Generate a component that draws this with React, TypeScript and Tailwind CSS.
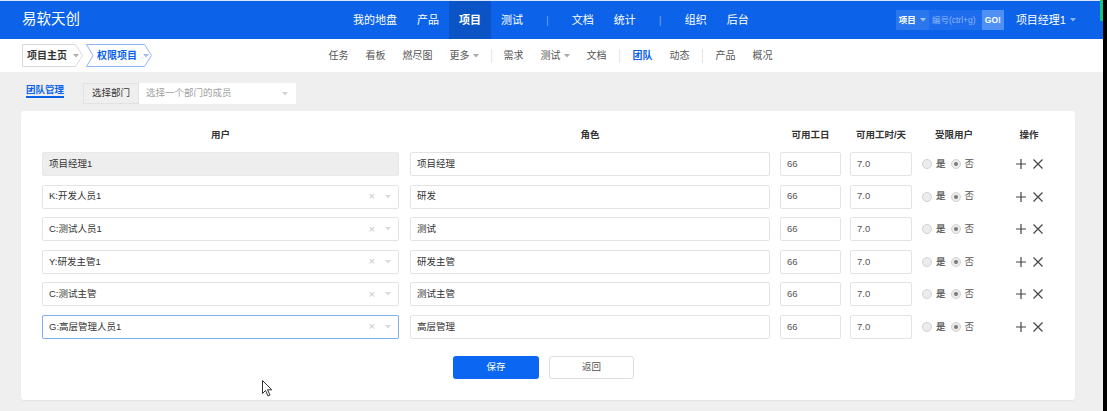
import React from "react";

const rows = [
  { user: "项目经理1", role: "项目经理", disabled: true },
  { user: "K:开发人员1", role: "研发" },
  { user: "C:测试人员1", role: "测试" },
  { user: "Y:研发主管1", role: "研发主管" },
  { user: "C:测试主管", role: "测试主管" },
  { user: "G:高层管理人员1", role: "高层管理", focus: true },
];

function Caret({ className = "" }: { className?: string }) {
  return (
    <svg width="6" height="4" viewBox="0 0 6 4" className={className}>
      <path d="M0 0 L6 0 L3 3.5 Z" fill="currentColor" />
    </svg>
  );
}

function Radio({ checked }: { checked?: boolean }) {
  return (
    <span className="flex h-[10px] w-[10px] items-center justify-center rounded-full border border-[#d2d2d2] bg-[#ececec]">
      {checked && <span className="h-[4px] w-[4px] rounded-full bg-[#7a7a7a]" />}
    </span>
  );
}

export default function App() {
  return (
    <div className="relative flex h-[411px] w-[1107px] overflow-hidden bg-black font-['Liberation_Sans','Noto_Sans_CJK_SC',sans-serif]">
      <div className="flex w-[1103px] flex-col bg-[#efefef]">
        {/* top header */}
        <div className="flex h-[39px] items-center border-t border-[#d8e5fb] bg-[#0c63ea] text-white">
          <div className="w-[343px] pl-[22px] text-[14.5px]">易软天创</div>
          <nav className="flex h-full items-center text-[11px]">
            <span className="px-[10px]">我的地盘</span>
            <span className="px-[10px]">产品</span>
            <span className="flex h-full items-center bg-[#0a54c6] px-[10px] font-bold">项目</span>
            <span className="px-[10px]">测试</span>
            <span className="px-[13px] text-[#6fa0f0]">|</span>
            <span className="px-[10px]">文档</span>
            <span className="px-[10px]">统计</span>
            <span className="px-[13px] text-[#6fa0f0]">|</span>
            <span className="px-[10px]">组织</span>
            <span className="px-[10px]">后台</span>
          </nav>
          <div className="ml-auto flex h-[20px] items-stretch text-[8.5px]">
            <div className="flex w-[33px] items-center justify-center gap-[4px] bg-[#2b77ee] font-bold">
              项目 <Caret className="text-[#a9c6f6]" />
            </div>
            <div className="flex w-[53px] items-center bg-[#1c6ced] pl-[3px] text-[#8fb6f4]">编号(ctrl+g)</div>
            <div className="flex w-[22px] items-center justify-center bg-[#4f91f2] font-bold text-white">GO!</div>
          </div>
          <div className="ml-[12px] mr-[27px] flex items-center gap-[4px] text-[11px]">
            项目经理1 <Caret className="text-[#8fb6f4]" />
          </div>
        </div>

        {/* second bar */}
        <div className="flex h-[33px] items-center bg-white text-[10px] text-[#555]">
          <div className="flex items-center pl-[22px]">
            <div className="relative flex h-[23px] w-[61px] items-center pl-[5px] font-bold text-[#333]">
              <svg className="absolute left-0 top-0" width="61" height="23" viewBox="0 0 61 23">
                <path d="M0.5 0.5 H53.5 L60.5 11.5 L53.5 22.5 H0.5 Z" fill="none" stroke="#d9d9d9" />
              </svg>
              <span className="relative">项目主页</span>
              <Caret className="relative ml-[6px] text-[#b0b0b0]" />
            </div>
            <div className="relative ml-[3px] flex h-[23px] w-[66px] items-center pl-[11px] font-bold text-[#0c63ea]">
              <svg className="absolute left-0 top-0" width="66" height="23" viewBox="0 0 66 23">
                <path d="M0.5 0.5 H58.5 L65.5 11.5 L58.5 22.5 H0.5 L7 11.5 Z" fill="none" stroke="#8fb5f2" />
              </svg>
              <span className="relative">权限项目</span>
              <Caret className="relative ml-[6px] text-[#9dbdf3]" />
            </div>
          </div>
          <div className="ml-[168px] flex items-center">
            <span className="px-[8.5px]">任务</span>
            <span className="px-[8.5px]">看板</span>
            <span className="px-[8.5px]">燃尽图</span>
            <span className="flex items-center gap-[3px] px-[8.5px]">更多<Caret className="text-[#aaa]" /></span>
            <span className="mx-[3.5px] h-[14px] w-px bg-[#e6e6e6]" />
            <span className="px-[8.5px]">需求</span>
            <span className="flex items-center gap-[3px] px-[8.5px]">测试<Caret className="text-[#aaa]" /></span>
            <span className="px-[8.5px]">文档</span>
            <span className="mx-[4px] h-[14px] w-px bg-[#e6e6e6]" />
            <span className="px-[8.5px] font-bold text-[#0c63ea]">团队</span>
            <span className="px-[8.5px]">动态</span>
            <span className="mx-[4px] h-[14px] w-px bg-[#e6e6e6]" />
            <span className="px-[8.5px]">产品</span>
            <span className="px-[8.5px]">概况</span>
          </div>
        </div>

        {/* sub toolbar */}
        <div className="flex h-[39px] items-start pl-[26px] pt-[10px] text-[9.5px]">
          <div className="mt-[2px] flex flex-col">
            <span className="h-[11px] font-bold leading-[11px] text-[#0c63ea]">团队管理</span>
            <span className="mt-[1px] h-[2px] bg-[#0c63ea]" />
          </div>
          <div className="ml-[19px] mt-[1px] flex h-[21px] items-stretch">
            <div className="flex w-[56px] items-center justify-center border border-[#e2e2e2] bg-[#efefef] text-[#333]">选择部门</div>
            <div className="flex w-[157px] items-center justify-between bg-white pl-[7px] pr-[8px] text-[#a0a0a0]">
              选择一个部门的成员
              <Caret className="text-[#d4d4d4]" />
            </div>
          </div>
        </div>

        {/* card */}
        <div className="ml-[21px] w-[1054px] rounded-[3px] bg-white pb-[21px] pl-[21px] pt-[14px] shadow-[0_1px_2px_rgba(0,0,0,0.05)]">
          <div className="flex h-[21px] items-center text-[9.5px] font-bold text-[#333]">
            <div className="w-[357px] text-center">用户</div>
            <div className="ml-[11px] w-[360px] text-center">角色</div>
            <div className="ml-[10px] w-[61px] text-center">可用工日</div>
            <div className="ml-[9px] w-[62px] text-center">可用工时/天</div>
            <div className="w-[84px] text-center">受限用户</div>
            <div className="w-[62px] pl-[4px] text-center">操作</div>
          </div>
          <div className="mt-[6px] flex flex-col gap-[8.6px] text-[9.5px] text-[#333]">
            {rows.map((r) => (
              <div key={r.user} className="flex h-[24px] items-stretch">
                <div
                  className={
                    "flex w-[357px] items-center justify-between rounded-[2px] border pl-[6px] pr-[7px] " +
                    (r.disabled
                      ? "border-[#e8e8e8] bg-[#eeeeee]"
                      : r.focus
                      ? "border-[#7eaef0] bg-white"
                      : "border-[#e3e3e3] bg-white")
                  }
                >
                  <span>{r.user}</span>
                  {!r.disabled && (
                    <span className="flex items-center gap-[10px] text-[#c8c8c8]">
                      <span className="text-[11px] leading-none">×</span>
                      <Caret className="text-[#dadada]" />
                    </span>
                  )}
                </div>
                <div className="ml-[11px] flex w-[360px] items-center rounded-[2px] border border-[#e3e3e3] pl-[6px]">{r.role}</div>
                <div className="ml-[10px] flex w-[61px] items-center rounded-[2px] border border-[#e3e3e3] pl-[6px] text-[#555]">66</div>
                <div className="ml-[9px] flex w-[62px] items-center rounded-[2px] border border-[#e3e3e3] pl-[6px] text-[#555]">7.0</div>
                <div className="flex w-[84px] items-center pl-[10px] text-[#555]">
                  <Radio />
                  <span className="ml-[4px] font-bold text-[#666]">是</span>
                  <span className="ml-[5px]"><Radio checked /></span>
                  <span className="ml-[4px]">否</span>
                </div>
                <div className="flex w-[62px] items-center justify-center gap-[7px] pl-[4px]">
                  <svg width="10" height="10" viewBox="0 0 10 10"><path d="M5 0 V10 M0 5 H10" stroke="#444" strokeWidth="1.2" /></svg>
                  <svg width="10" height="10" viewBox="0 0 10 10"><path d="M0.5 0.5 L9.5 9.5 M9.5 0.5 L0.5 9.5" stroke="#444" strokeWidth="1.2" /></svg>
                </div>
              </div>
            ))}
          </div>
          <div className="mt-[17px] flex justify-center pr-[30px] text-[9.5px]">
            <button className="h-[23px] w-[86px] rounded-[3px] bg-[#0b67f2] text-white">保存</button>
            <button className="ml-[10px] h-[23px] w-[85px] rounded-[3px] border border-[#dedede] bg-white text-[#555]">返回</button>
          </div>
        </div>
      </div>

      {/* green marker at right edge */}
      <div className="absolute right-[4px] top-0 h-[21px] w-[3px] bg-[#19c37d]" />

      {/* mouse cursor */}
      <svg className="absolute left-[262px] top-[380px]" width="12" height="17" viewBox="0 0 12 17">
        <path d="M0.5 0.5 V13.5 L3.5 10.5 L6 16 L8 15 L5.5 9.8 H9.8 Z" fill="white" stroke="#333" strokeWidth="1" strokeLinejoin="round" />
      </svg>
    </div>
  );
}
